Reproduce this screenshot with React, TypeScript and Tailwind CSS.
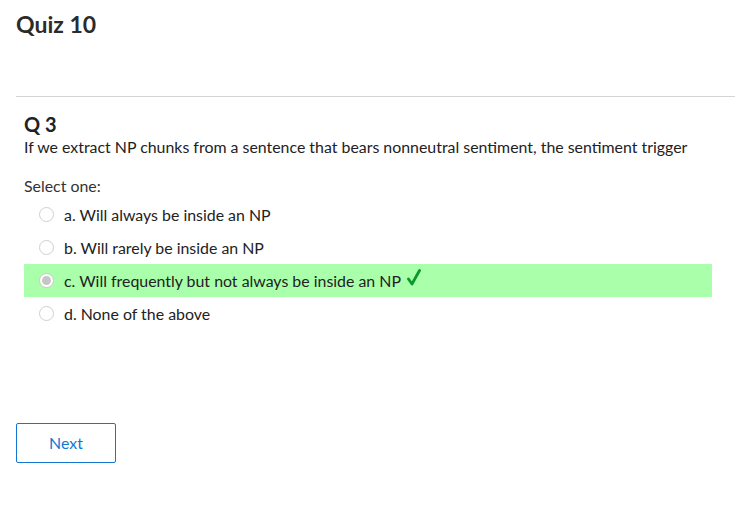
import React from "react";

const options = [
  { key: "a", text: "a. Will always be inside an NP" },
  { key: "b", text: "b. Will rarely be inside an NP" },
  { key: "c", text: "c. Will frequently but not always be inside an NP", correct: true },
  { key: "d", text: "d. None of the above" },
];

function Radio({ checked }: { checked?: boolean }) {
  return (
    <span
      className={
        "flex h-[15px] w-[15px] items-center justify-center rounded-full border " +
        (checked ? "border-[#c8c8c8] bg-white" : "border-[#d0d0d0] bg-white")
      }
    >
      {checked && <span className="h-[9px] w-[9px] rounded-full bg-[#c6c6c6]" />}
    </span>
  );
}

export default function App() {
  return (
    <div className="h-[526px] w-[735px] bg-white text-[#333333]" style={{ fontFamily: "Lato, 'Open Sans', sans-serif" }}>
      <div className="px-4 pt-[10px]">
        <h1 className="text-[23px] font-bold leading-[28px] text-[#2b2b2b]">Quiz 10</h1>
      </div>
      <div className="ml-4 mt-[58px] border-t border-[#d4d4d4]" />
      <div className="px-6 pt-[15px]">
        <h2 className="text-[20px] font-bold leading-[24px] text-[#222]">Q 3</h2>
        <p className="mt-[1px] text-[15.9px] leading-[20px] text-[#222]">
          If we extract NP chunks from a sentence that bears nonneutral sentiment, the sentiment trigger
        </p>
        <p className="mt-[19px] text-[15.9px] leading-[20px]">Select one:</p>
      </div>
      <div className="ml-6 mr-[23px] mt-[2px] flex flex-col">
        {options.map((o) => (
          <div
            key={o.key}
            className={"flex h-[33px] items-center pl-[15px] " + (o.correct ? "bg-[#aaffaa]" : "")}
          >
            <Radio checked={o.correct} />
            <span className="ml-[10px] text-[15.9px] text-[#222]">{o.text}</span>
            {o.correct && (
              <svg className="ml-[6px] -mt-[6px]" width="14" height="17" viewBox="0 0 14 17">
                <path d="M1.5 10 L5 15 L12.5 1.5" fill="none" stroke="#0a9a2a" strokeWidth="2.8" strokeLinecap="round" strokeLinejoin="round" />
              </svg>
            )}
          </div>
        ))}
      </div>
      <div className="px-4 pt-[93px]">
        <button className="h-[40px] w-[100px] rounded-[2px] border border-[#1177d1] bg-white text-[15.9px] text-[#1177d1]">
          Next
        </button>
      </div>
    </div>
  );
}
